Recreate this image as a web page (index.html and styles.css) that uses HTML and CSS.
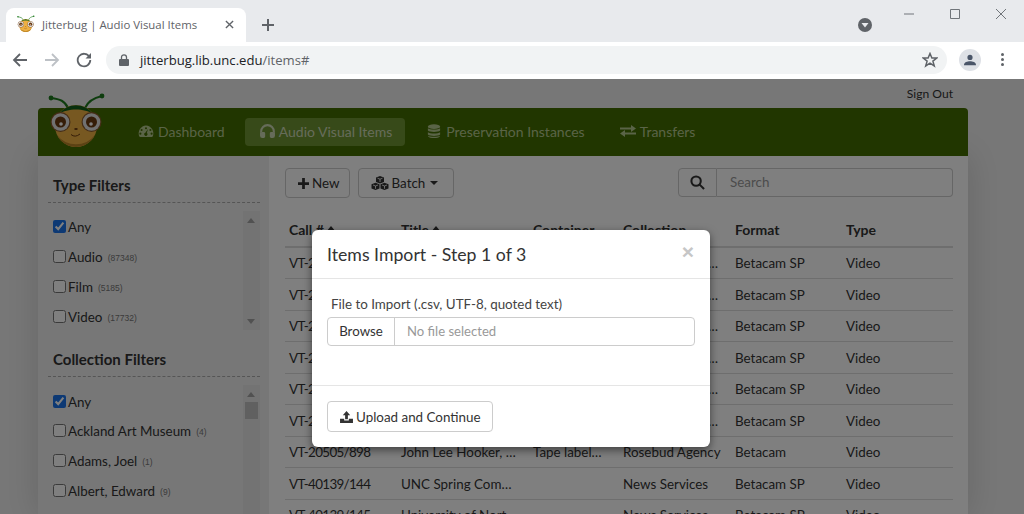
FILE: index.html
```html
<!DOCTYPE html>
<html lang="en">
<head>
<meta charset="utf-8">
<title>Jitterbug | Audio Visual Items</title>
<link rel="stylesheet" href="styles.css">
</head>
<body>
<svg class="defs" width="0" height="0" aria-hidden="true">
  <symbol id="bug" viewBox="0 0 58 56">
    <path d="M20 15C17 8 12 6 3 5" fill="none" stroke="#1d7a1d" stroke-width="2"/>
    <path d="M37 15C40 8 45 5 54 3" fill="none" stroke="#1d7a1d" stroke-width="2"/>
    <circle cx="3" cy="5" r="2.4" fill="#1d7a1d"/><circle cx="54" cy="3" r="2.4" fill="#1d7a1d"/>
    <circle cx="28" cy="33" r="21" fill="#eeb043"/>
    <path d="M9 42A21 21 0 0 0 47 42A24 24 0 0 1 9 42Z" fill="#b98428"/>
    <path d="M11 21A21 21 0 0 1 45 21C37 15 19 15 11 21Z" fill="#12601a"/>
    <circle cx="12.500" cy="29" r="10" fill="#8a5a2c"/><circle cx="12.500" cy="29" r="8.800" fill="#e2e2e2"/>
    <circle cx="12.500" cy="29" r="5.500" fill="#6b3a10"/><circle cx="13" cy="31" r="1.800" fill="#fff"/>
    <circle cx="43.500" cy="29" r="10" fill="#8a5a2c"/><circle cx="43.500" cy="29" r="8.800" fill="#e2e2e2"/>
    <circle cx="43.500" cy="29" r="5.500" fill="#6b3a10"/><circle cx="43" cy="31" r="1.800" fill="#fff"/>
    <ellipse cx="28" cy="36" rx="1.800" ry="1" fill="#6b3a10"/>
    <path d="M23 41.500Q27 45 32 41" fill="none" stroke="#6b3a10" stroke-width="1"/>
  </symbol>
</svg>

<header class="chrome">
  <div class="tabstrip">
    <div class="tab">
      <svg class="favicon"><use href="#bug"/></svg>
      <span class="tab-title">Jitterbug | Audio Visual Items</span>
      <svg class="tab-close" viewBox="0 0 10 10"><path d="M1 1L9 9M9 1L1 9"/></svg>
    </div>
    <svg class="new-tab" viewBox="0 0 12 12"><path d="M6 0V12M0 6H12"/></svg>
    <svg class="media" viewBox="0 0 14 14"><circle cx="7" cy="7" r="7"/><path d="M3.500 5H10.500L7 9.500Z"/></svg>
    <div class="winctl">
      <svg viewBox="0 0 10 10"><path d="M0 5H10"/></svg>
      <svg viewBox="0 0 10 10"><path d="M.5 .5H9.500V9.500H.5Z"/></svg>
      <svg viewBox="0 0 10 10"><path d="M0 0L10 10M10 0L0 10"/></svg>
    </div>
  </div>
  <div class="toolbar">
    <svg class="nav back" viewBox="0 0 16 16"><path d="M15 8H2M8 2L2 8L8 14"/></svg>
    <svg class="nav fwd" viewBox="0 0 16 16"><path d="M1 8H14M8 2L14 8L8 14"/></svg>
    <svg class="nav reload" viewBox="0 0 16 16"><path d="M13.500 5A6.300 6.300 0 1 0 14.300 8"/><path class="fill" d="M15 1V6.500H9.500Z"/></svg>
    <div class="omnibox">
      <svg class="lock" viewBox="0 0 10 12"><path d="M2.500 5V3.300A2.500 2.500 0 0 1 7.500 3.300V5" fill="none" stroke="#5f6368" stroke-width="1.300"/><rect y="5" width="10" height="7" rx="1" fill="#5f6368"/></svg>
      <span class="url">jitterbug.lib.unc.edu<span class="url-path">/items#</span></span>
      <svg class="star" viewBox="0 0 16 16"><path d="M8 1.500L9.900 6H14.800L10.900 9.100L12.300 14L8 11.200L3.700 14L5.100 9.100L1.200 6H6.100Z"/></svg>
    </div>
    <div class="avatar"><svg viewBox="0 0 14 14"><circle cx="7" cy="4" r="3"/><path d="M0 13C0 9.500 4 8.500 7 8.500S14 9.500 14 13Z"/></svg></div>
    <div class="kebab"><i></i><i></i><i></i></div>
  </div>
</header>

<div class="page">
  <div class="signout-row"><a class="signout">Sign Out</a></div>
  <div class="app">
    <nav class="topnav">
      <svg class="logo"><use href="#bug"/></svg>
      <a class="navitem">
        <svg class="ico ico-dash" viewBox="0 0 20 16"><path fill-rule="evenodd" d="M10 1A10 10 0 0 0 1.500 14.500A1.500 1.500 0 0 0 3 15.500H17A1.500 1.500 0 0 0 18.500 14.500A10 10 0 0 0 10 1ZM10 3.200A1.300 1.300 0 1 1 10 5.800A1.300 1.300 0 0 1 10 3.200ZM4.500 5.500A1.300 1.300 0 1 1 4.500 8.100A1.300 1.300 0 0 1 4.500 5.500ZM15.500 5.500A1.300 1.300 0 1 1 15.500 8.100A1.300 1.300 0 0 1 15.500 5.500ZM3 10A1.300 1.300 0 1 1 3 12.600A1.300 1.300 0 0 1 3 10ZM17 10A1.300 1.300 0 1 1 17 12.600A1.300 1.300 0 0 1 17 10ZM12.500 5.500L11 10.500A2 2 0 1 1 9.200 10.200Z"/></svg>
        Dashboard</a>
      <a class="navitem active">
        <svg class="ico ico-head" viewBox="0 0 16 15"><path d="M1.200 9.500V8A6.800 6.800 0 0 1 14.800 8V9.500" fill="none" stroke="currentColor" stroke-width="2.200"/><path d="M0 9H2V8.500H4A1.500 1.500 0 0 1 5.500 10V13.500A1.500 1.500 0 0 1 4 15H2.500A2.500 2.500 0 0 1 0 12.500ZM16 9H14V8.500H12A1.500 1.500 0 0 0 10.500 10V13.500A1.500 1.500 0 0 0 12 15H13.500A2.500 2.500 0 0 0 16 12.500Z"/></svg>
        Audio Visual Items</a>
      <a class="navitem">
        <svg class="ico ico-db" viewBox="0 0 14 16"><ellipse cx="7" cy="3" rx="7" ry="2.800"/><path d="M0 4.800C2 6.700 12 6.700 14 4.800V7.500C12 9.700 2 9.700 0 7.500ZM0 9.300C2 11.200 12 11.200 14 9.300V12C12 14.200 2 14.200 0 12ZM0 13.300C2 15 12 15 14 13.300V13.500C14 17 0 17 0 13.500Z"/></svg>
        Preservation Instances</a>
      <a class="navitem">
        <svg class="ico ico-swap" viewBox="0 0 16 14"><path d="M0 3.500H11V1L16 4.500L11 8V5.500H0ZM16 8.500H5V6L0 9.500L5 13V10.500H16Z"/></svg>
        Transfers</a>
    </nav>
    <div class="columns">
      <aside class="sidebar">
        <h3 class="filter-title">Type Filters</h3>
        <div class="filter-box type-box">
          <ul class="filter-list">
            <li><label><input type="checkbox" checked><span>Any</span></label></li>
            <li><label><input type="checkbox"><span>Audio</span><small>(87348)</small></label></li>
            <li><label><input type="checkbox"><span>Film</span><small>(5185)</small></label></li>
            <li><label><input type="checkbox"><span>Video</span><small>(17732)</small></label></li>
          </ul>
          <div class="scrollbar"><b class="up"></b><b class="down"></b></div>
        </div>
        <h3 class="filter-title second">Collection Filters</h3>
        <div class="filter-box coll-box">
          <ul class="filter-list">
            <li><label><input type="checkbox" checked><span>Any</span></label></li>
            <li><label><input type="checkbox"><span>Ackland Art Museum</span><small>(4)</small></label></li>
            <li><label><input type="checkbox"><span>Adams, Joel</span><small>(1)</small></label></li>
            <li><label><input type="checkbox"><span>Albert, Edward</span><small>(9)</small></label></li>
            <li><label><input type="checkbox"></label></li>
          </ul>
          <div class="scrollbar"><b class="up"></b><em class="thumb"></em></div>
        </div>
      </aside>
      <main class="main">
        <div class="actions">
          <button class="btn"><svg class="btn-ico" viewBox="0 0 12 12"><path d="M4.500 0H7.500V4.500H12V7.500H7.500V12H4.500V7.500H0V4.500H4.500Z"/></svg>New</button>
          <button class="btn"><svg class="btn-ico cubes" viewBox="0 0 18 14"><path d="M9 0L13 1.500V6L9 7.500L5 6V1.500ZM4.500 6.800L8.500 8.300V12.500L4.500 14L.5 12.500V8.300ZM13.500 6.800L17.500 8.300V12.500L13.500 14L9.500 12.500V8.300Z"/><path class="cube-lines" d="M6.500 2.200L9 3.200L11.500 2.200M9 3.200V6M2 9L4.500 10L7 9M4.500 10V12.800M11 9L13.500 10L16 9M13.500 10V12.800"/></svg>Batch<i class="caret"></i></button>
          <div class="search">
            <span class="search-addon"><svg viewBox="0 0 16 16"><circle cx="6.500" cy="6.500" r="5"/><path d="M10 10L15 15"/></svg></span>
            <span class="search-input">Search</span>
          </div>
        </div>
        <table class="items">
          <colgroup><col class="c1"><col class="c2"><col class="c3"><col class="c4"><col class="c5"><col class="c6"></colgroup>
          <thead>
            <tr><th>Call #<i class="sort"></i></th><th>Title<i class="sort"></i></th><th>Container</th><th>Collection</th><th>Format</th><th>Type</th></tr>
          </thead>
          <tbody>
            <tr><td>VT-20505/892</td><td>John Lee Hooker</td><td>Tape label</td><td>Southern Folklife Collection</td><td>Betacam SP</td><td>Video</td></tr>
            <tr><td>VT-20505/893</td><td>John Lee Hooker</td><td>Tape label</td><td>Southern Folklife Collection</td><td>Betacam SP</td><td>Video</td></tr>
            <tr><td>VT-20505/894</td><td>John Lee Hooker</td><td>Tape label</td><td>Southern Folklife Collection</td><td>Betacam SP</td><td>Video</td></tr>
            <tr><td>VT-20505/895</td><td>John Lee Hooker</td><td>Tape label</td><td>Southern Folklife Collection</td><td>Betacam SP</td><td>Video</td></tr>
            <tr><td>VT-20505/896</td><td>John Lee Hooker</td><td>Tape label</td><td>Southern Folklife Collection</td><td>Betacam SP</td><td>Video</td></tr>
            <tr><td>VT-20505/897</td><td>John Lee Hooker</td><td>Tape label</td><td>Southern Folklife Collection</td><td>Betacam SP</td><td>Video</td></tr>
            <tr><td>VT-20505/898</td><td>John Lee Hooker, Live at the Rosebud</td><td>Tape label…</td><td>Rosebud Agency</td><td>Betacam</td><td>Video</td></tr>
            <tr><td>VT-40139/144</td><td>UNC Spring Commencement</td><td></td><td>News Services</td><td>Betacam SP</td><td>Video</td></tr>
            <tr><td>VT-40139/145</td><td>University of North Carolina</td><td></td><td>News Services</td><td>Betacam SP</td><td>Video</td></tr>
          </tbody>
        </table>
      </main>
    </div>
  </div>

  <div class="backdrop">
    <div class="modal">
      <div class="modal-head">
        <h4>Items Import - Step 1 of 3</h4>
        <span class="modal-x">×</span>
      </div>
      <div class="modal-body">
        <label class="file-label">File to Import (.csv, UTF-8, quoted text)</label>
        <div class="file">
          <span class="file-btn">Browse</span>
          <span class="file-name">No file selected</span>
        </div>
      </div>
      <div class="modal-foot">
        <button class="btn upload"><svg class="btn-ico" viewBox="0 0 14 13"><path d="M7 0L11 4.500H8.500V9H5.500V4.500H3ZM0 8.500H4.500V10.300H9.500V8.500H14V13H0Z"/></svg>Upload and Continue</button>
      </div>
    </div>
  </div>
</div>
</body>
</html>
```

FILE: styles.css
```css
* { box-sizing: border-box; }
html, body { margin: 0; height: 514px; overflow: hidden; }
body { background: #fff; font-family: "Lato", "Liberation Sans", sans-serif; font-size: 13.400px; color: #333; }
.defs { position: absolute; }
a { text-decoration: none; }

/* browser chrome */
.chrome { height: 79px; font-family: "Open Sans", "Liberation Sans", sans-serif; }
.tabstrip { height: 42px; background: #e8eaed; display: flex; align-items: flex-start; position: relative; }
.tab { width: 240px; height: 34px; margin: 8px 0 0 6px; background: #fff; border-radius: 8px 8px 0 0; display: flex; align-items: center; padding: 0 12px 2px 11px; }
.favicon { width: 18px; height: 18px; flex: none; }
.tab-title { font-size: 11.400px; color: #5f6368; margin-left: 7px; flex: 1; white-space: nowrap; }
.tab-close { width: 9px; height: 9px; fill: none; stroke: #5f6368; stroke-width: 1.500; }
.new-tab { width: 12px; height: 12px; margin: 19px 0 0 16px; fill: none; stroke: #5f6368; stroke-width: 2; }
.media { width: 14px; height: 14px; margin: 18px 0 0 584px; }
.media circle { fill: #5f6368; }
.media path { fill: #e8eaed; }
.winctl { display: flex; gap: 36px; margin: 9px 0 0 32px; }
.winctl svg { width: 10px; height: 10px; fill: none; stroke: #70757a; stroke-width: 1; }
.toolbar { height: 37px; background: #fff; display: flex; align-items: center; padding: 0 14px 2px 12px; }
.nav { width: 16px; height: 16px; fill: none; stroke: #5f6368; stroke-width: 1.800; flex: none; margin-right: 16px; }
.nav.fwd { stroke: #bdc1c6; }
.nav .fill { fill: #5f6368; stroke: none; }
.nav.reload { margin-right: 14px; }
.omnibox { width: 841px; height: 28px; background: #f1f3f4; border-radius: 14px; display: flex; align-items: center; padding: 0 9px 0 13px; }
.lock { width: 10px; height: 12px; flex: none; }
.url { font-size: 13.100px; color: #202124; margin-left: 11px; flex: 1; }
.url-path { color: #5f6368; }
.star { width: 16px; height: 16px; fill: none; stroke: #5f6368; stroke-width: 1.500; }
.avatar { width: 22px; height: 22px; border-radius: 50%; background: #dee1e6; margin-left: 12px; display: flex; align-items: center; justify-content: center; }
.avatar svg { width: 12px; height: 12px; fill: #4a5568; }
.kebab { margin-left: 20px; display: flex; flex-direction: column; gap: 2px; }
.kebab i { width: 3px; height: 3px; border-radius: 50%; background: #5f6368; }

/* page */
.page { position: relative; height: 435px; overflow: hidden; background: #eee; padding: 0 56px 0 38px; }
.signout-row { height: 29px; padding: 6px 15px 0 0; text-align: right; line-height: 16px; }
.signout { font-size: 12.100px; color: #333; }
.topnav { position: relative; height: 48px; background: #436c00; border-radius: 4px 4px 0 0; display: flex; align-items: center; padding-left: 85px; gap: 7px; }
.logo { position: absolute; left: 10px; top: -15px; width: 58px; height: 56px; }
.navitem { height: 28px; display: flex; align-items: center; padding: 0 13px 2px 15px; font-size: 14px; color: #b4c88e; border-radius: 4px; }
.navitem.active { background: #6f9433; color: #cdd9b5; }
.ico { height: 14px; fill: currentColor; margin-right: 4px; flex: none; }
.ico-dash { width: 16px; }
.ico-head { width: 15px; }
.ico-db { width: 14px; margin-right: 5px; }
.ico-swap { width: 16px; }
.columns { display: flex; height: 358px; box-shadow: 0 0 30px rgba(0, 0, 0, .14); }
.sidebar { width: 231px; flex: none; background: #eee; padding: 20px 9px 0 10px; }
.main { flex: 1; background: #fff; padding: 12px 15px 0 16px; }
.filter-title { margin: 0 0 0 5px; font-size: 15px; line-height: 18px; font-weight: 700; color: #333; }
.filter-title + .filter-box { margin-top: 8px; border-top: 1px dashed #aaa; padding-top: 8px; }
.filter-title.second { margin-top: 20px; }
.filter-box { display: flex; }
.type-box { height: 128px; }
.coll-box { height: 140px; }
.filter-list { list-style: none; margin: 0; padding: 6px 0 0 5px; flex: 1; }
.coll-box .filter-list { padding-top: 7px; }
.filter-list li { height: 30px; }
.coll-box .filter-list li:first-child { height: 29px; }
.filter-list label { display: flex; align-items: center; height: 18px; white-space: nowrap; }
.filter-list input { width: 13px; height: 13px; margin: 0 2px 0 0; accent-color: #1a73e8; }
.filter-list span { font-size: 13.400px; color: #333; margin-top: 2px; }
.filter-list small { font-size: 8.500px; color: #777; margin: 3px 0 0 5px; font-family: "Liberation Sans", sans-serif; }
.scrollbar { width: 17px; height: 119px; background: #e6e6e6; flex: none; position: relative; }
.coll-box .scrollbar { height: 200px; }
.scrollbar b { display: block; width: 0; height: 0; border: 4px solid transparent; position: absolute; left: 4px; }
.scrollbar .up { border-bottom: 5px solid #a3a3a3; border-top: 0; top: 7px; }
.scrollbar .down { border-top: 5px solid #a3a3a3; border-bottom: 0; bottom: 6px; }
.thumb { display: block; position: absolute; left: 2px; top: 17px; width: 13px; height: 17px; background: #c1c1c1; }

.actions { display: flex; align-items: flex-start; height: 30px; gap: 8px; }
.btn { height: 30px; padding: 0 9px 0 12px; background: #fff; border: 1px solid #ccc; border-radius: 4px; font: inherit; font-size: 13.400px; color: #333; display: inline-flex; align-items: center; }
.btn-ico { width: 11px; height: 11px; fill: #333; margin-right: 3px; }
.btn-ico.cubes { width: 18px; height: 14px; }
.cube-lines { fill: none; stroke: #fff; stroke-width: .8; }
.caret { width: 0; height: 0; border: 4px solid transparent; border-top: 4px solid #333; border-bottom: 0; margin: 0 6px 0 5px; }
.search { margin-left: auto; display: flex; width: 275px; height: 29px; }
.search-addon { width: 39px; border: 1px solid #ccc; border-radius: 4px 0 0 4px; display: flex; align-items: center; justify-content: center; background: #fff; }
.search-addon svg { width: 15px; height: 15px; fill: none; stroke: #333; stroke-width: 2.200; }
.search-input { flex: 1; border: 1px solid #ccc; border-left: 0; border-radius: 0 4px 4px 0; padding: 0 13px; line-height: 27px; color: #999; }

.items { width: 100%; table-layout: fixed; border-collapse: collapse; margin-top: 19.300px; }
.c1 { width: 112px; } .c2 { width: 132px; } .c3 { width: 90px; } .c4 { width: 112px; } .c5 { width: 111px; }
.items th { text-align: left; height: 30px; padding: 0 4px 4px; font-size: 14px; font-weight: 700; border-bottom: 2px solid #ddd; color: #333; white-space: nowrap; overflow: hidden; }
.items td { height: 31.500px; padding: 0 10px 0 4px; font-size: 13.400px; border-bottom: 1px solid #ddd; white-space: nowrap; overflow: hidden; text-overflow: ellipsis; color: #333; }
.items td:first-child { letter-spacing: -.67px; }
.sort { display: inline-block; width: 0; height: 0; border: 5px solid transparent; border-bottom: 6px solid #333; border-top: 0; margin-left: 2px; vertical-align: 3px; }

/* modal */
.backdrop { position: absolute; inset: 0; background: rgba(0, 0, 0, .5); }
.modal { position: absolute; left: 312px; top: 151px; width: 398px; height: 217px; background: #fff; border-radius: 6px; box-shadow: 0 3px 9px rgba(0, 0, 0, .5); display: flex; flex-direction: column; }
.modal-head { height: 49px; border-bottom: 1px solid #e5e5e5; padding: 0 15px; display: flex; align-items: center; justify-content: space-between; }
.modal-head h4 { margin: 0; font-size: 17.700px; font-weight: 400; color: #333; }
.modal-x { font-size: 21px; font-weight: 700; color: #c6c6c6; line-height: 1; margin: -6px 1px 0 0; font-family: "Liberation Sans", sans-serif; }
.modal-body { height: 107px; border-bottom: 1px solid #e5e5e5; padding: 15px 15px 0; }
.file-label { display: block; font-size: 13.400px; color: #444; padding-left: 4px; line-height: 20px; }
.file { display: flex; height: 29px; margin-top: 3px; border: 1px solid #ccc; border-radius: 4px; }
.file-btn { width: 67px; border-right: 1px solid #ccc; text-align: center; line-height: 26px; font-size: 13.300px; color: #333; }
.file-name { padding-left: 12px; line-height: 26px; font-size: 13.100px; color: #999; }
.modal-foot { flex: 1; padding: 15px 15px 0; }
.btn.upload { height: 31px; padding: 0 11px 0 12px; }
.upload .btn-ico { width: 13px; height: 12px; margin-right: 3px; }
```
